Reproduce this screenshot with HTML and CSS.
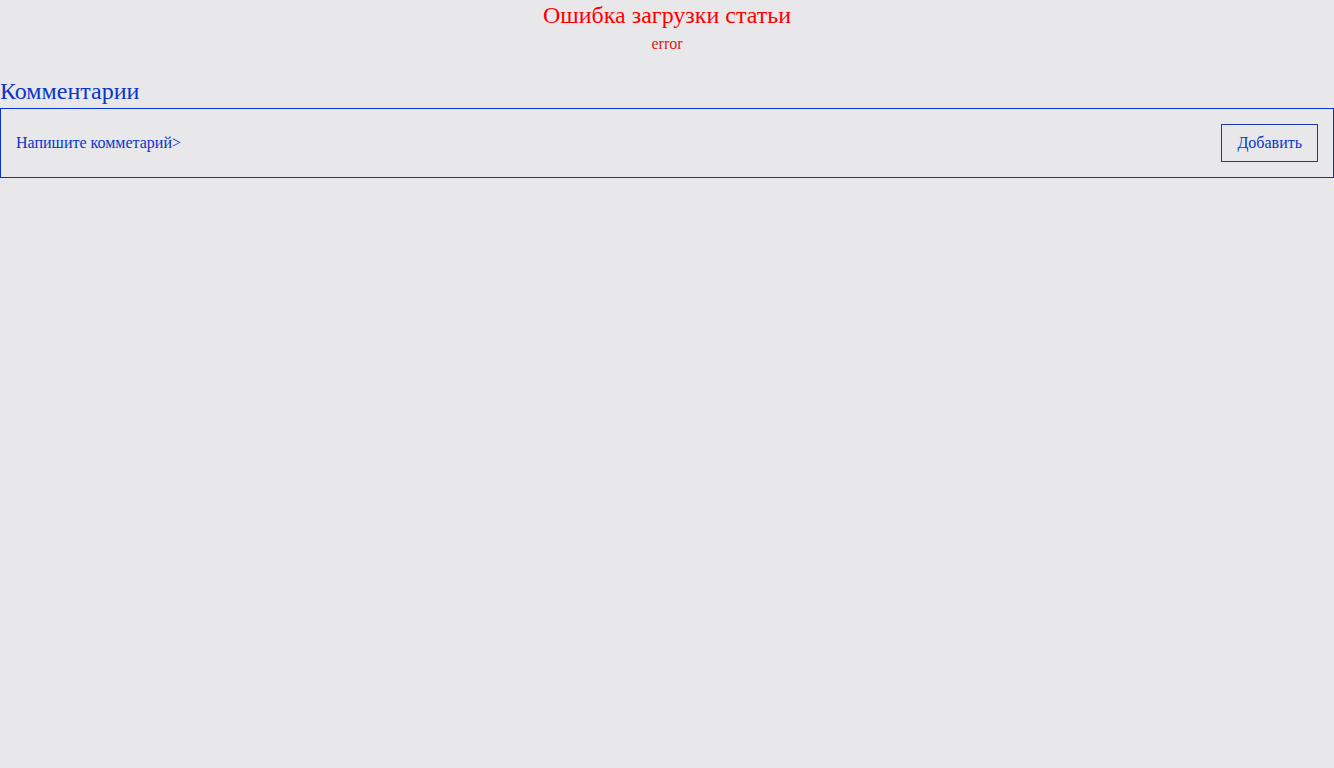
FILE: index.html
```html
<!DOCTYPE html>
<html lang="ru">
<head>
<meta charset="utf-8">
<title>Статья</title>
<link rel="stylesheet" href="styles.css">
</head>
<body>
<div class="article-error">
  <div class="error-title">Ошибка загрузки статьи</div>
  <div class="error-text">error</div>
</div>
<section class="comments">
  <h2 class="comments-title">Комментарии</h2>
  <form class="comment-form">
    <a class="comment-link" href="#">Напишите комметарий&gt;</a>
    <button class="add-btn" type="button">Добавить</button>
  </form>
</section>
</body>
</html>
```
FILE: styles.css
```css
html, body {
  margin: 0;
  padding: 0;
  background: #e8e8ea;
  font-family: "Liberation Serif", "Times New Roman", serif;
}

.article-error {
  text-align: center;
}

.error-title {
  margin-top: 1px;
  font-size: 24px;
  line-height: 28px;
  color: #ff0000;
}

.error-text {
  margin-top: 6px;
  font-size: 16px;
  line-height: 18px;
  color: #d01c1c;
}

.comments-title {
  margin: 24px 0 0;
  font-size: 24px;
  font-weight: normal;
  line-height: 28px;
  color: #0a36c8;
}

.comment-form {
  margin-top: 3px;
  display: flex;
  align-items: center;
  justify-content: space-between;
  padding: 15px;
  border: 1px solid #0a36c8;
}

.comment-link {
  font-size: 16px;
  color: #0a36c8;
  text-decoration: none;
}

.add-btn {
  font-family: "Liberation Serif", "Times New Roman", serif;
  font-size: 16px;
  line-height: 18px;
  padding: 9px 15px;
  background: transparent;
  color: #0a36c8;
  border: 1px solid #1a38a8;
  border-radius: 0;
}
```
